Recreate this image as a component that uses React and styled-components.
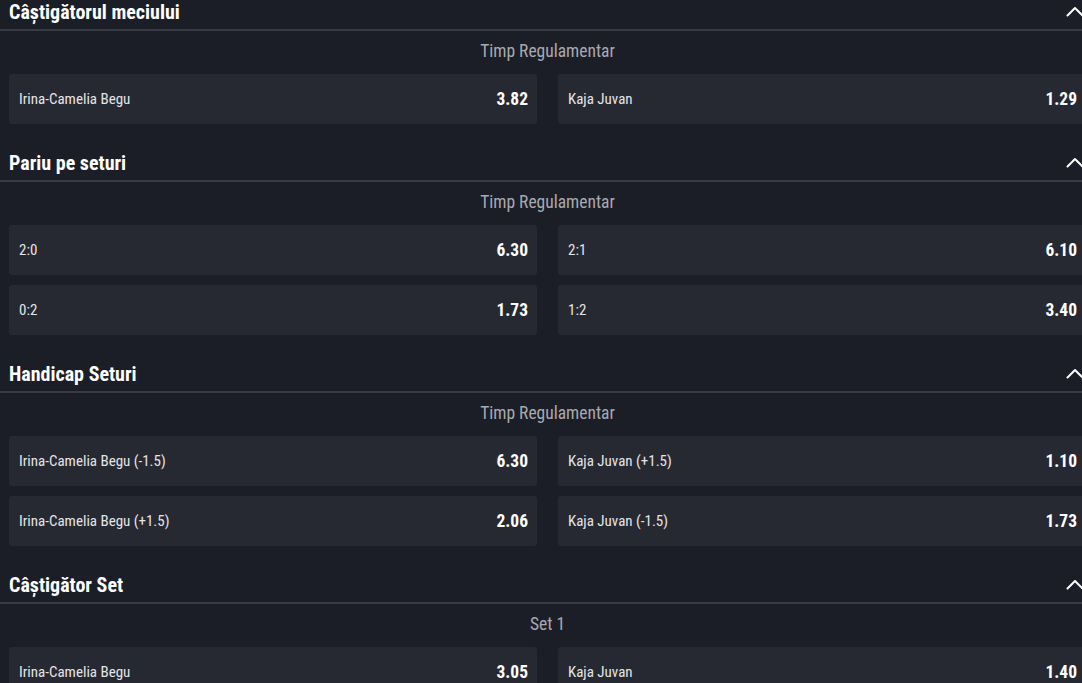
import React from 'react'
import styled, {createGlobalStyle} from 'styled-components'

const GlobalStyle = createGlobalStyle`
  html, body {
    margin: 0;
    padding: 0;
    background: #1c1e27;
    overflow: hidden;
  }
  body {
    font-family: Roboto, "Liberation Sans", sans-serif;
    font-stretch: 87.5%;
  }
`

const markets = [
  {
    title: 'Câștigătorul meciului',
    period: 'Timp Regulamentar',
    rows: [
      [['Irina-Camelia Begu', '3.82'], ['Kaja Juvan', '1.29']],
    ],
  },
  {
    title: 'Pariu pe seturi',
    period: 'Timp Regulamentar',
    rows: [
      [['2:0', '6.30'], ['2:1', '6.10']],
      [['0:2', '1.73'], ['1:2', '3.40']],
    ],
  },
  {
    title: 'Handicap Seturi',
    period: 'Timp Regulamentar',
    rows: [
      [['Irina-Camelia Begu (-1.5)', '6.30'], ['Kaja Juvan (+1.5)', '1.10']],
      [['Irina-Camelia Begu (+1.5)', '2.06'], ['Kaja Juvan (-1.5)', '1.73']],
    ],
  },
  {
    title: 'Câștigător Set',
    period: 'Set 1',
    rows: [
      [['Irina-Camelia Begu', '3.05'], ['Kaja Juvan', '1.40']],
    ],
  },
]

const Chevron = () => (
  <svg width="18" height="11" viewBox="0 0 18 11" fill="none">
    <path d="M1.5 9.5 L9 2 L16.5 9.5" stroke="#ffffff" strokeWidth="2" strokeLinecap="round" strokeLinejoin="round" />
  </svg>
)

export default function App() {
  return (
    <Page>
      <GlobalStyle />
      {markets.map((market) => (
        <Section key={market.title}>
          <Header>
            <Title>{market.title}</Title>
            <Toggle><Chevron /></Toggle>
          </Header>
          <Period>{market.period}</Period>
          <Grid>
            {market.rows.map((row) => row.map(([label, odds]) => (
              <OddCard key={label + odds}>
                <Label>{label}</Label>
                <Odds>{odds}</Odds>
              </OddCard>
            )))}
          </Grid>
        </Section>
      ))}
    </Page>
  )
}

const Page = styled.div`
  width: 1095px;
  display: flex;
  flex-direction: column;
  gap: 27px;
`

const Section = styled.section`
  display: flex;
  flex-direction: column;
`

const Header = styled.div`
  display: flex;
  justify-content: space-between;
  align-items: flex-start;
  height: 29px;
  padding: 0 11px 0 9px;
  border-bottom: 2px solid #393b44;
`

const Title = styled.h2`
  margin: 0;
  font-size: 20px;
  line-height: 25px;
  font-weight: 700;
  color: #ffffff;
`

const Toggle = styled.span`
  display: flex;
  padding-top: 6px;
`

const Period = styled.div`
  height: 43px;
  line-height: 40px;
  text-align: center;
  font-size: 17.5px;
  color: #a8aab0;
`

const Grid = styled.div`
  display: grid;
  grid-template-columns: 1fr 1fr;
  column-gap: 21px;
  row-gap: 10px;
  padding: 0 9px;
`

const OddCard = styled.div`
  display: flex;
  align-items: center;
  justify-content: space-between;
  height: 50px;
  padding: 0 9px 0 10px;
  background: #272932;
  border-radius: 3px;
`

const Label = styled.span`
  font-size: 15px;
  color: #e4e5e8;
`

const Odds = styled.span`
  font-size: 17.5px;
  font-weight: 700;
  color: #ffffff;
`
